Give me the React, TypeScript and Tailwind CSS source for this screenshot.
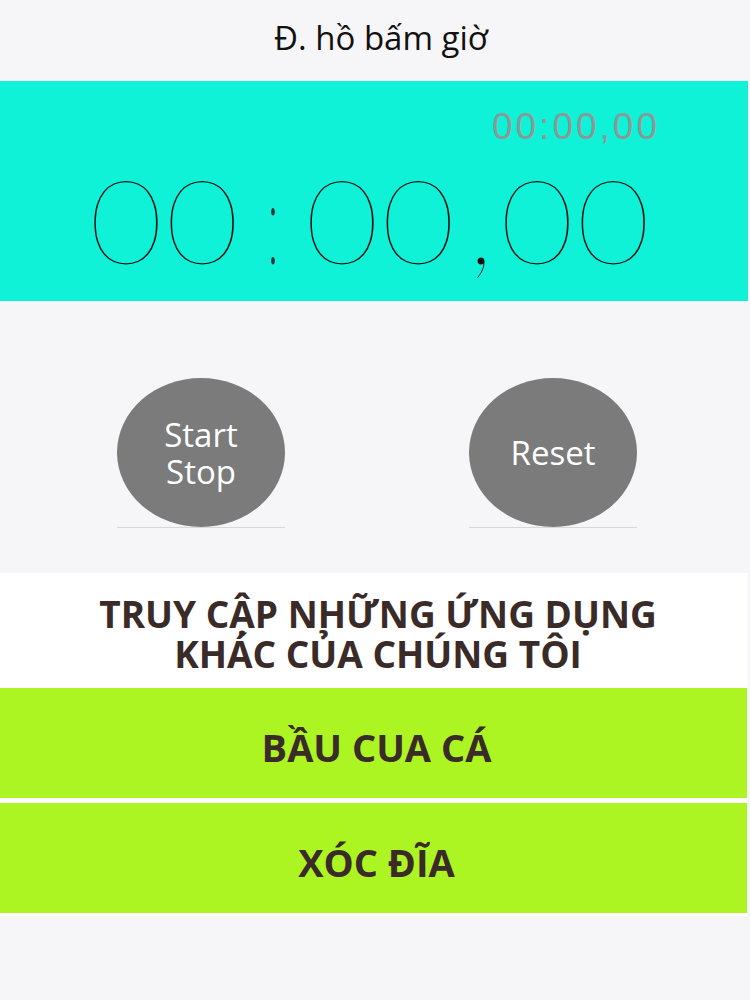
export default function App() {
  return (
    <div className="w-[750px] h-[1000px] bg-[#f6f6f8] flex flex-col font-['Open_Sans',sans-serif]">
      <header className="h-[81px] flex items-center justify-center">
        <h1 className="text-[33px] text-[#111] pb-[6px] pl-[12px]">Đ. hồ bấm giờ</h1>
      </header>

      <section className="h-[220px] w-[748px] bg-[#0ff2d8] flex flex-col">
        <div className="text-right pr-[88px] pt-[25px] font-['Liberation_Sans',sans-serif] text-[37px] leading-[42px] tracking-[3px] text-[#8a9996]">
          00:00,00
        </div>
        <div className="flex justify-center items-center pt-[12px] pr-[6px] font-['Lato',sans-serif] font-thin text-[116px] leading-[120px] text-[#111] tracking-[2px]">
          <span className="inline-block scale-x-[1.1]">00</span>
          <span className="inline-block mx-[24px] scale-x-[0.5] text-[#333]">:</span>
          <span className="inline-block scale-x-[1.1]">00</span>
          <span className="inline-block ml-[18px] mr-[12px]">,</span>
          <span className="inline-block scale-x-[1.1]">00</span>
        </div>
      </section>

      <section className="h-[272px] flex justify-center gap-[184px] pt-[77px] pl-[4px]">
        {[["Start", "Stop"], ["Reset"]].map((lines) => (
          <div key={lines[0]} className="flex flex-col items-center">
            <button className="w-[168px] h-[149px] rounded-[50%] bg-[#7b7b7b] text-white text-[33px] leading-[37px] flex flex-col items-center justify-center">
              {lines.map((l) => (
                <span key={l}>{l}</span>
              ))}
            </button>
            <div className="w-[168px] h-px bg-[#d8d8d8]" />
          </div>
        ))}
      </section>

      <section className="h-[115px] w-[748px] bg-white flex flex-col items-center justify-center text-[#3a2b28] font-bold text-[37px] leading-[40px] pt-[6px] pl-[8px]">
        <span>TRUY CẬP NHỮNG ỨNG DỤNG</span>
        <span>KHÁC CỦA CHÚNG TÔI</span>
      </section>

      <div className="w-[747px] bg-white flex flex-col gap-[5px] pb-[3px]">
        <button className="h-[110px] bg-[#acf522] text-[#3a2b28] font-bold text-[38px] pt-[8px] pl-[6px]">
          BẦU CUA CÁ
        </button>
        <button className="h-[110px] bg-[#acf522] text-[#3a2b28] font-bold text-[38px] pt-[8px] pl-[6px]">
          XÓC ĐĨA
        </button>
      </div>
    </div>
  );
}
